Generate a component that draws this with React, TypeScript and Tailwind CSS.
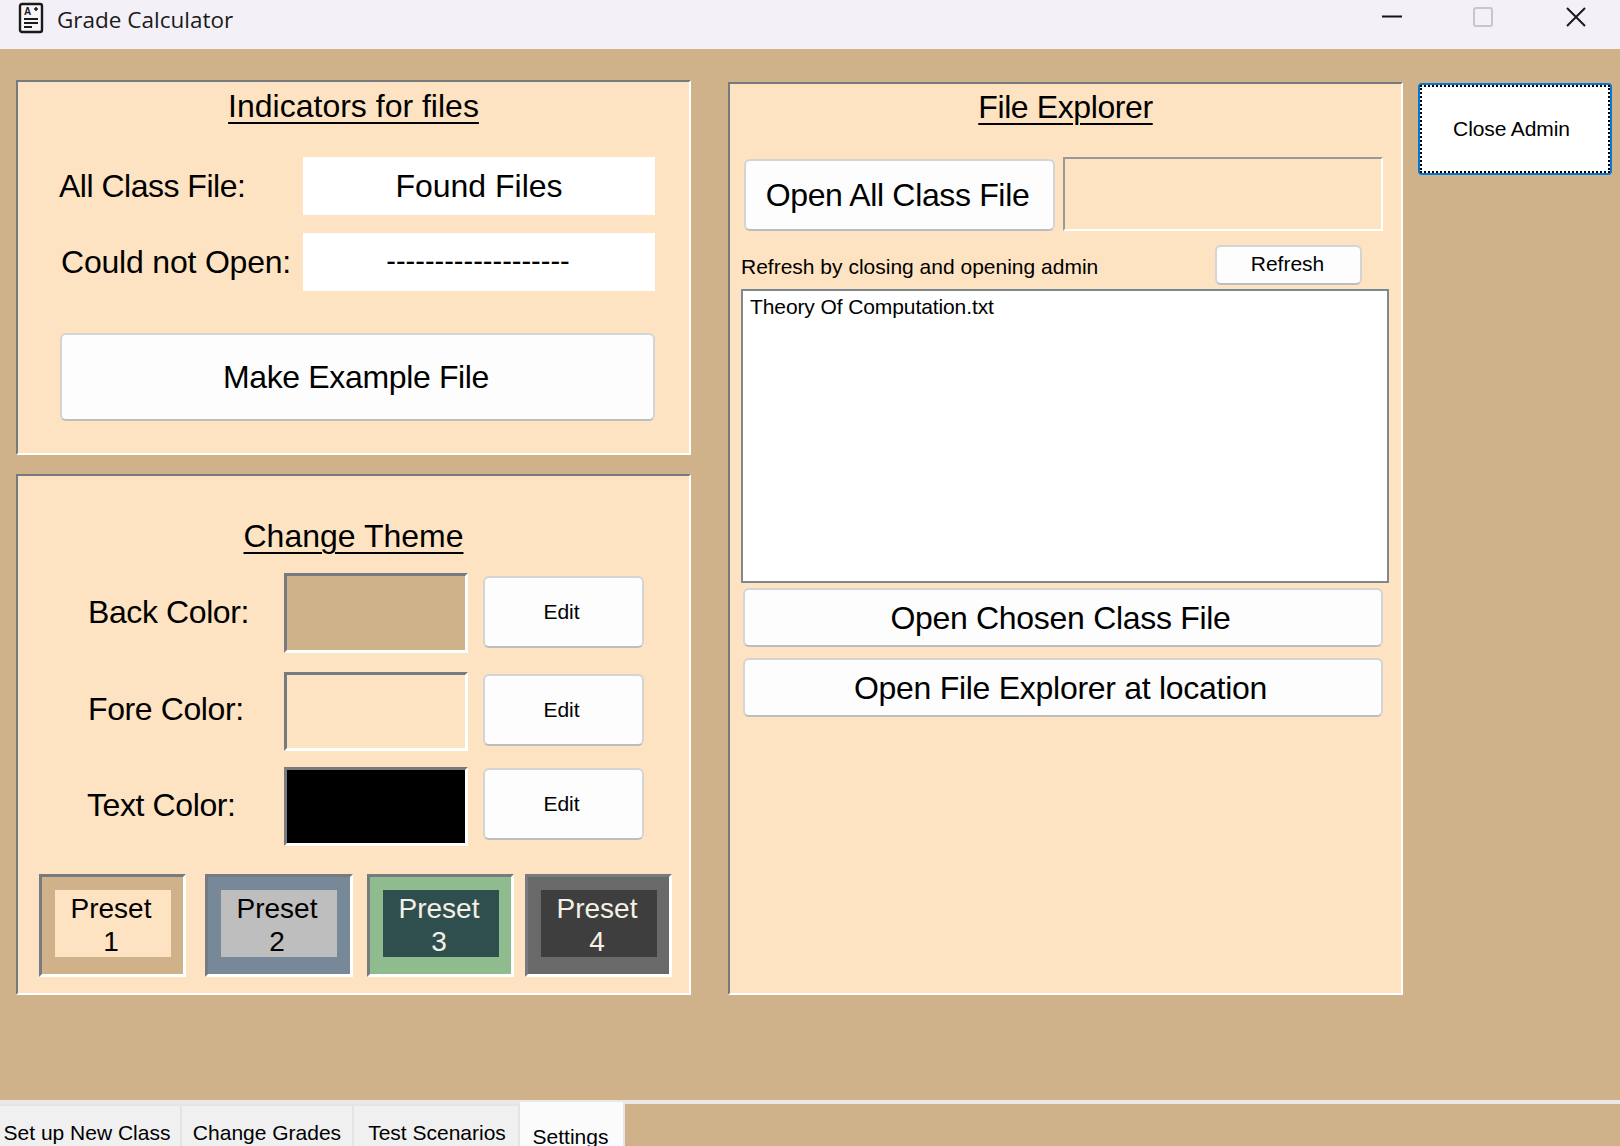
const sans = 'font-["Liberation_Sans",Arial,sans-serif]';

const inset3d = 'border-t-[#777b80] border-l-[#777b80] border-b-white border-r-white';
const flatButton =
  'flex items-center justify-center rounded-[6px] border-2 border-[#d4d4d4] border-b-[#bdbdbd] bg-[#fdfdfd] text-black';

const presets = [
  { id: 1, outer: 'bg-[#d0b28a]', inner: 'bg-[#fee3c2] text-black', box: 'ml-[21px] w-[147px]' },
  { id: 2, outer: 'bg-[#778899]', inner: 'bg-[#bebebe] text-black', box: 'ml-[19px] w-[148px]' },
  { id: 3, outer: 'bg-[#8fbc8f]', inner: 'bg-[#2f4f4f] text-[#f5f0e6]', box: 'ml-[14px] w-[147px]' },
  { id: 4, outer: 'bg-[#696969]', inner: 'bg-[#3e3e3e] text-[#f5f0e6]', box: 'ml-[11px] w-[147px]' },
];

const colorRows = [
  { label: 'Back Color:', swatch: 'bg-[#d0b28a]', row: 'mt-[13px] h-[80px]', text: 'h-[78px] w-[196px]', edit: 'mt-[3px]' },
  { label: 'Fore Color:', swatch: 'bg-[#fee3c2]', row: 'mt-[19px] h-[79px]', text: 'h-[73px] w-[196px]', edit: 'mt-[2px]' },
  { label: 'Text Color:', swatch: 'bg-black', row: 'mt-[16px] h-[79px]', text: '-ml-[1px] h-[75px] w-[197px]', edit: 'mt-[1px]' },
];

const tabs = [
  { label: 'Set up New Class', width: 'w-[182px] pr-[6px]' },
  { label: 'Change Grades', width: 'w-[172px]' },
  { label: 'Test Scenarios', width: 'w-[166px] pl-[2px]' },
];

function AppIcon() {
  return (
    <svg width="26" height="32" viewBox="0 0 26 32" fill="none" className="mt-[2px] shrink-0">
      <rect x="2" y="2" width="22" height="28" rx="2" stroke="#1a1a1a" strokeWidth="2.4" fill="#f7f5f8" />
      <text x="6" y="13" fontSize="10" fontWeight="700" fontFamily="Liberation Sans" fill="#1a1a1a">
        A
      </text>
      <path d="M16 7h4M18 5v4" stroke="#1a1a1a" strokeWidth="1.5" />
      <path d="M6 17h14M6 21h14M6 25h8" stroke="#1a1a1a" strokeWidth="1.8" />
    </svg>
  );
}

function SectionTitle({ children, className }: { children: string; className: string }) {
  return (
    <div className={`flex items-center justify-center text-[32px] underline underline-offset-[5px] decoration-2 ${className}`}>
      {children}
    </div>
  );
}

function TitleBar() {
  return (
    <div className="flex h-[49px] shrink-0 items-center bg-[#f3f1f7] pb-[15px]">
      <div className="ml-[18px] flex items-center">
        <AppIcon />
      </div>
      <span className='ml-[13px] pt-[5px] font-["Open_Sans",sans-serif] text-[22.5px] text-[#1a1a1a]'>Grade Calculator</span>
      <div className="ml-auto flex items-center">
        <svg width="20" height="20" viewBox="0 0 20 20" className="mr-[71px]">
          <path d="M0 9.5h20" stroke="#111" strokeWidth="2" />
        </svg>
        <svg width="20" height="20" viewBox="0 0 20 20" className="mr-[73px]">
          <rect x="1" y="1" width="18" height="18" rx="2" fill="none" stroke="#c8c6cb" strokeWidth="2" />
        </svg>
        <svg width="20" height="20" viewBox="0 0 20 20" className="mr-[34px]">
          <path d="M1 1l18 18M19 1L1 19" stroke="#1a1a1a" strokeWidth="2" />
        </svg>
      </div>
    </div>
  );
}

function IndicatorsPanel() {
  return (
    <div className={`h-[375px] w-[675px] border-2 bg-[#fee3c2] ${inset3d}`}>
      <SectionTitle className="h-[48px]">Indicators for files</SectionTitle>
      <div className="mt-[27px] flex h-[58px] items-center pl-[41px]">
        <span className="w-[244px] text-[32px] tracking-[-0.5px]">All Class File:</span>
        <div className="flex h-full w-[352px] items-center justify-center bg-white pb-[1px] text-[32px]">Found Files</div>
      </div>
      <div className="mt-[18px] flex h-[58px] items-center pl-[43px]">
        <span className="w-[242px] text-[32px] tracking-[-0.2px]">Could not Open:</span>
        <div className="flex h-full w-[352px] items-center justify-center bg-white pr-[2px] text-[29px]">-------------------</div>
      </div>
      <button className={`ml-[42px] mt-[42px] h-[88px] w-[595px] pr-[3px] text-[32px] tracking-[-0.35px] ${flatButton}`}>Make Example File</button>
    </div>
  );
}

function ThemePanel() {
  return (
    <div className={`mt-[19px] h-[521px] w-[675px] border-2 bg-[#fee3c2] ${inset3d}`}>
      <SectionTitle className="mt-[36px] h-[48px]">Change Theme</SectionTitle>
      {colorRows.map((r) => (
        <div key={r.label} className={`flex items-start pl-[70px] ${r.row}`}>
          <span className={`flex shrink-0 items-center text-[32px] tracking-[-0.4px] ${r.text}`}>{r.label}</span>
          <div className={`h-full w-[184px] shrink-0 border-[3px] ${inset3d} ${r.swatch}`} />
          <button className={`ml-[15px] h-[72px] w-[161px] pr-[4px] text-[21px] ${r.edit} ${flatButton}`}>Edit</button>
        </div>
      ))}
      <div className="mt-[28px] flex">
        {presets.map((p) => (
          <div key={p.id} className={`h-[103px] border-[3px] p-[13px] ${inset3d} ${p.outer} ${p.box}`}>
            <div className={`flex h-[67px] w-[116px] flex-col items-center justify-center pr-[4px] pt-[2px] text-[28px] leading-[33px] ${p.inner}`}>
              <span>Preset</span>
              <span>{p.id}</span>
            </div>
          </div>
        ))}
      </div>
    </div>
  );
}

function ExplorerPanel() {
  return (
    <div className={`ml-[37px] mt-[2px] h-[913px] w-[675px] border-2 bg-[#fee3c2] ${inset3d}`}>
      <SectionTitle className="h-[46px] tracking-[-0.4px]">File Explorer</SectionTitle>
      <div className="mt-[27px] flex items-end pl-[14px]">
        <button className={`h-[72px] w-[311px] pr-[4px] text-[32px] tracking-[-0.35px] ${flatButton}`}>Open All Class File</button>
        <div className="ml-[8px] h-[74px] w-[320px] border-2 border-t-[#999] border-l-[#999] border-b-white border-r-white" />
      </div>
      <div className="mt-[14px] flex h-[40px] items-center pl-[11px]">
        <span className="w-[474px] pt-[4px] text-[21px]">Refresh by closing and opening admin</span>
        <button className={`h-[40px] w-[147px] pb-[2px] pr-[2px] text-[21px] ${flatButton}`}>Refresh</button>
      </div>
      <div className="ml-[11px] mt-[4px] h-[294px] w-[648px] border-2 border-[#7f8790] bg-white pl-[7px] pt-[3px] text-[21px] leading-[26px] tracking-[-0.1px]">
        Theory Of Computation.txt
      </div>
      <button className={`ml-[13px] mt-[5px] h-[59px] w-[640px] pr-[5px] text-[32px] tracking-[-0.3px] ${flatButton}`}>Open Chosen Class File</button>
      <button className={`ml-[13px] mt-[11px] h-[59px] w-[640px] pr-[5px] text-[32px] tracking-[-0.28px] ${flatButton}`}>Open File Explorer at location</button>
    </div>
  );
}

function TabStrip() {
  return (
    <div className="flex h-[46px] shrink-0 items-start overflow-hidden bg-[#ebe9e7]">
      {tabs.map((t) => (
        <div
          key={t.label}
          className={`mt-[4px] flex h-[42px] items-start justify-center border-r-2 border-t-2 border-[#e4e4e4] bg-[#f0f0f0] pt-[15px] text-[21px] leading-[24px] ${t.width}`}
        >
          {t.label}
        </div>
      ))}
      <div className="mt-[2px] flex h-[44px] w-[105px] items-start justify-center border-r-2 border-[#e4e4e4] bg-[#fbfbfb] pr-[2px] pt-[23px] text-[21px] leading-[24px]">
        Settings
      </div>
      <div className="mt-[4px] h-[42px] flex-1 bg-[#d0b28a]" />
    </div>
  );
}

export default function App() {
  return (
    <div className={`flex h-[1146px] w-[1620px] flex-col overflow-hidden text-black ${sans}`}>
      <TitleBar />
      <div className="flex min-h-0 flex-1 items-start bg-[#d0b28a] pl-[16px] pt-[31px]">
        <div className="flex flex-col">
          <IndicatorsPanel />
          <ThemePanel />
        </div>
        <ExplorerPanel />
        <button className="ml-[15px] mt-[3px] h-[92px] w-[194px] rounded-[4px] border-2 border-[#0078d4] bg-white">
          <div className="flex h-full items-center justify-center border-2 border-dotted border-black pr-[7px] text-[21px] tracking-[-0.1px]">
            Close Admin
          </div>
        </button>
      </div>
      <TabStrip />
    </div>
  );
}
